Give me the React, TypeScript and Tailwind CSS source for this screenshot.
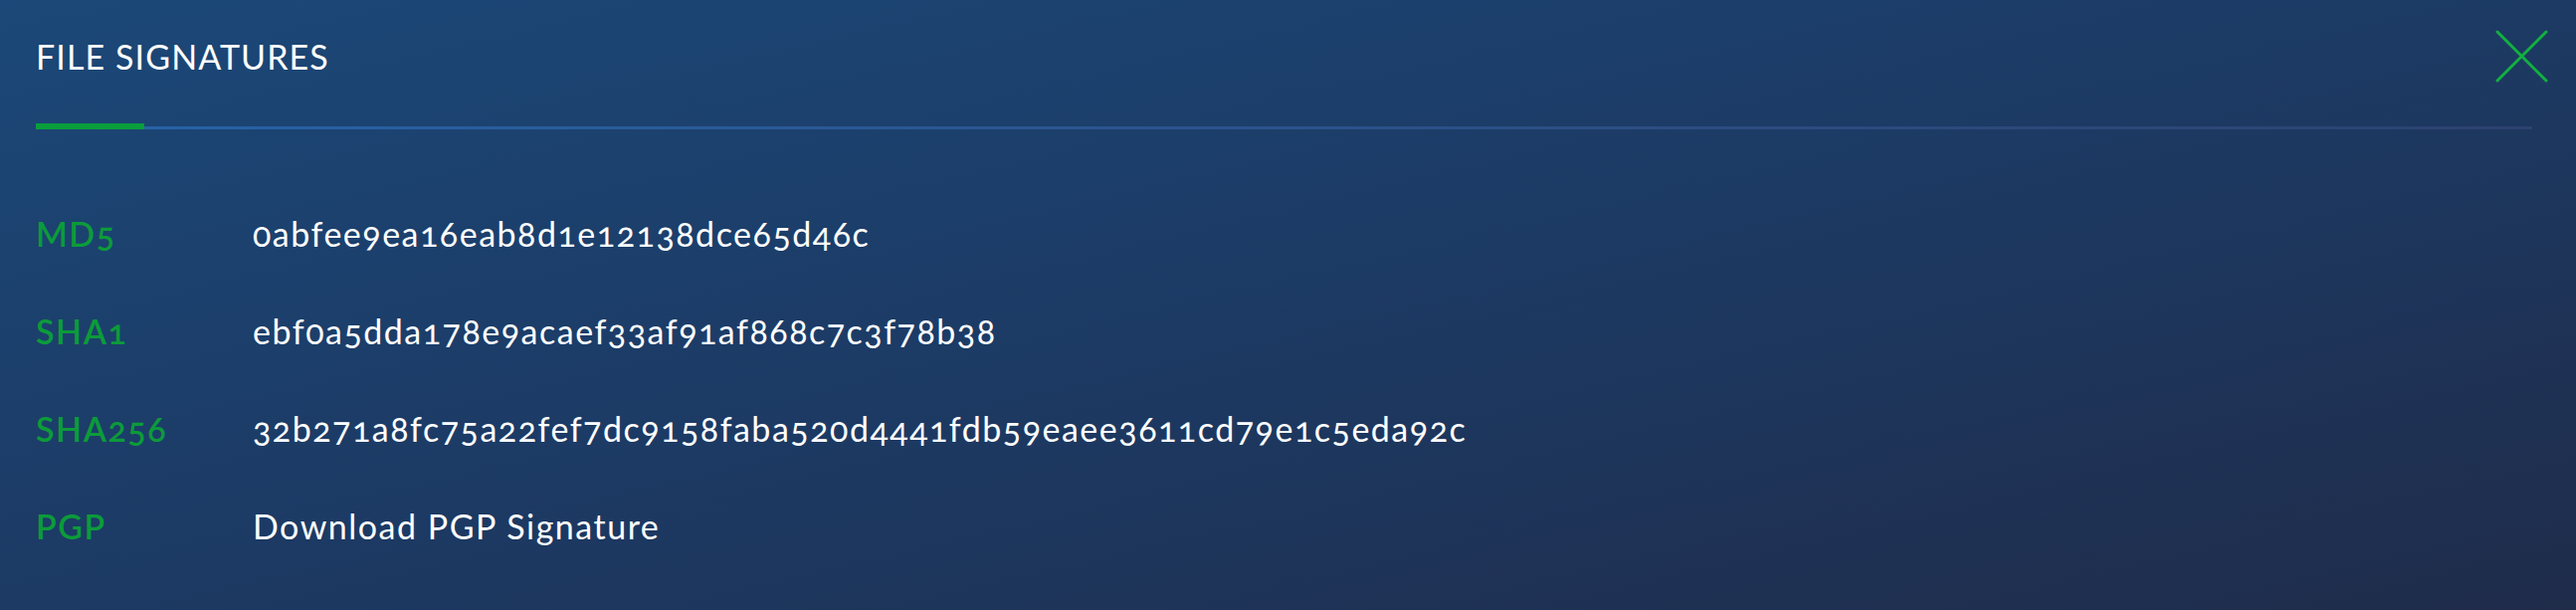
const rows = [
  { label: 'MD5', value: '0abfee9ea16eab8d1e12138dce65d46c' },
  { label: 'SHA1', value: 'ebf0a5dda178e9acaef33af91af868c7c3f78b38' },
  { label: 'SHA256', value: '32b271a8fc75a22fef7dc9158faba520d4441fdb59eaee3611cd79e1c5eda92c' },
  { label: 'PGP', value: 'Download PGP Signature' },
]

export default function App() {
  return (
    <div className="relative min-h-screen w-full bg-gradient-to-br from-[#1b4878] via-[#1c3a64] to-[#1f2c4a] font-['Lato','Liberation_Sans',sans-serif] text-white">
      <div className="flex flex-col pl-[36px] pr-[44px] pt-[40px]">
        <h1 className="text-[34px] leading-[34px] tracking-[1.1px] oldstyle-nums">FILE SIGNATURES</h1>
        <div className="mt-[50px] flex items-end">
          <div className="h-[6px] w-[109px] bg-[#0a9e3c]" />
          <div className="h-[3px] flex-1 bg-gradient-to-r from-[#2762a6] to-[#2c4270]" />
        </div>
      </div>
      <button className="absolute right-[28px] top-[30px] flex h-[53px] w-[53px] items-center justify-center">
        <svg viewBox="0 0 53 53" className="h-[53px] w-[53px]" fill="none" stroke="#12b040" strokeWidth="3" strokeLinecap="round">
          <path d="M2 2 L51 51 M51 2 L2 51" />
        </svg>
      </button>
      <div className="mt-[79px] flex flex-col gap-[48px] pl-[36px]">
        {rows.map((r) => (
          <div key={r.label} className="flex h-[50px] items-center text-[34px] tracking-[1.5px] oldstyle-nums">
            <span className="w-[218px] font-semibold text-[#0c9b3a]">{r.label}</span>
            <span className="text-white">{r.value}</span>
          </div>
        ))}
      </div>
    </div>
  )
}
